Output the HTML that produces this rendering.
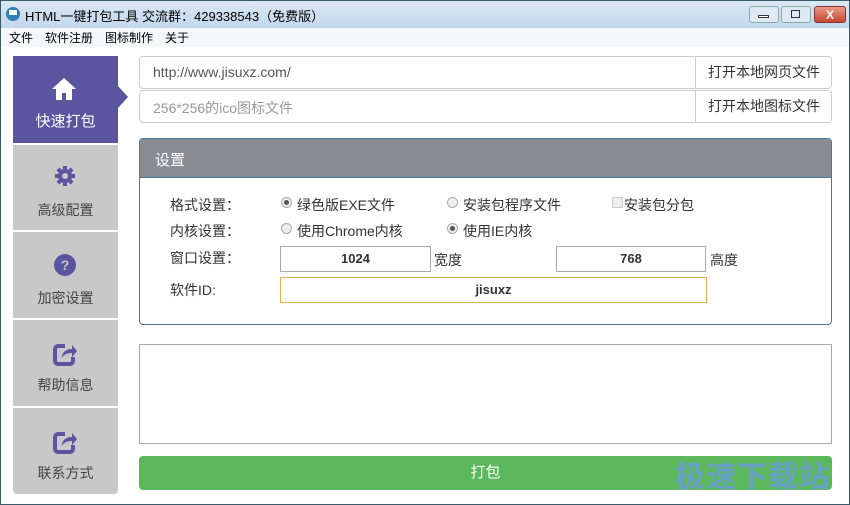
<!DOCTYPE html>
<html><head><meta charset="utf-8"><style>
*{box-sizing:border-box;margin:0;padding:0}
body{width:850px;height:505px;overflow:hidden;font-family:"Liberation Sans","Noto Sans CJK SC",sans-serif;background:#1e3d4a;position:relative}
.win{position:absolute;left:0;top:0;width:850px;height:505px;background:#fff;border:1px solid #3a5a68}
.title{position:absolute;left:0;top:0;width:848px;height:27px;background:linear-gradient(#dbe8f5,#c2d6ec);font-size:13px;color:#000}
.menu{position:absolute;left:0;top:27px;width:848px;height:19px;background:#f5f6f7;font-size:12px}
.menu span{position:absolute;top:1px}
.abs{position:absolute}
.side{position:absolute;left:12px;width:105px;background:#c8c8c8;color:#444;text-align:center;font-size:14px}
.inp{position:absolute;left:138px;width:693px;height:33px;border:1px solid #ccc;border-radius:4px;font-size:14px;color:#555}
.inp .t{position:absolute;left:13px;top:7px}
.inp .b{position:absolute;left:555px;top:0;width:137px;height:31px;border-left:1px solid #ccc;color:#333;text-align:center;line-height:31px}
.lab{position:absolute;font-size:14px;color:#333}
.rad{position:absolute;width:11px;height:11px;border-radius:50%;border:1px solid #aaa;background:#eee}
.rad.on::after{content:"";position:absolute;left:2px;top:2px;width:5px;height:5px;border-radius:50%;background:#555}
.box{position:absolute;border:1px solid #aaa;font-size:13px;font-weight:bold;text-align:center;line-height:24px;color:#333}
</style></head><body><div class="win">
<div class="title">
<div class="abs" style="left:5px;top:6px;width:14px;height:14px;border-radius:50%;background:#2e7fb8"></div>
<div class="abs" style="left:8px;top:9px;width:8px;height:5px;background:#fff"></div>
<span class="abs" style="left:24px;top:5px">HTML一键打包工具 交流群：429338543（免费版）</span>
<div class="abs" style="left:748px;top:5px;width:30px;height:17px;border:1px solid #8aa;border-radius:3px;background:#dfe9f4"></div>
<div class="abs" style="left:757px;top:14px;width:11px;height:3px;border:1px solid #333;background:#fff"></div>
<div class="abs" style="left:780px;top:5px;width:30px;height:17px;border:1px solid #8aa;border-radius:3px;background:#dfe9f4"></div>
<div class="abs" style="left:790px;top:9px;width:9px;height:8px;border:1px solid #333"></div>
<div class="abs" style="left:813px;top:5px;width:32px;height:17px;border:1px solid #833;border-radius:3px;background:linear-gradient(#e79a8c,#c7452f);color:#fff;font-weight:bold;text-align:center;font-size:12px;line-height:16px">X</div>
</div>
<div class="menu"><span style="left:8px">文件</span><span style="left:44px">软件注册</span><span style="left:104px">图标制作</span><span style="left:164px">关于</span></div>

<div class="side" style="top:55px;height:87px;background:#5b55a0;color:#fff;font-size:15px">
<svg class="abs" style="left:38px;top:20px" width="26" height="26" viewBox="0 0 26 26"><path d="M13 2L1 13h4v11h6v-7h4v7h6V13h4z" fill="#fff"/></svg>
<div class="abs" style="left:0;width:105px;top:54px">快速打包</div></div>
<svg class="abs" style="left:117px;top:85px" width="10" height="22"><path d="M0 0L10 11L0 22z" fill="#5b55a0"/></svg>
<div class="side" style="top:144px;height:85px">
<svg class="abs" style="left:41px;top:20px" width="22" height="22" viewBox="0 0 22 22"><g fill="#5b55a0"><circle cx="11" cy="11" r="7"/><rect x="9" y="1" width="4" height="20"/><rect x="1" y="9" width="20" height="4"/><rect x="9" y="1" width="4" height="20" transform="rotate(45 11 11)"/><rect x="9" y="1" width="4" height="20" transform="rotate(-45 11 11)"/></g><circle cx="11" cy="11" r="3" fill="#c8c8c8"/></svg>
<div class="abs" style="left:0;width:105px;top:55px">高级配置</div></div>
<div class="side" style="top:231px;height:86px">
<svg class="abs" style="left:40px;top:21px" width="24" height="24"><circle cx="12" cy="12" r="11" fill="#5b55a0"/><text x="12" y="17" font-size="14" font-weight="bold" fill="#c8c8c8" text-anchor="middle" font-family="Liberation Sans">?</text></svg>
<div class="abs" style="left:0;width:105px;top:56px">加密设置</div></div>
<div class="side" style="top:319px;height:86px">
<svg class="abs" style="left:40px;top:22px" width="24" height="24" viewBox="0 0 24 24"><path d="M12 4H5a3 3 0 0 0-3 3v12a3 3 0 0 0 3 3h12a3 3 0 0 0 3-3v-4" fill="none" stroke="#5b55a0" stroke-width="4"/><path d="M9 16c0-6 4-9 10-9V3l5 6-5 6v-4c-4 0-8 1-10 5z" fill="#5b55a0"/></svg>
<div class="abs" style="left:0;width:105px;top:55px">帮助信息</div></div>
<div class="side" style="top:407px;height:86px;border-radius:0 0 4px 4px">
<svg class="abs" style="left:40px;top:22px" width="24" height="24" viewBox="0 0 24 24"><path d="M12 4H5a3 3 0 0 0-3 3v12a3 3 0 0 0 3 3h12a3 3 0 0 0 3-3v-4" fill="none" stroke="#5b55a0" stroke-width="4"/><path d="M9 16c0-6 4-9 10-9V3l5 6-5 6v-4c-4 0-8 1-10 5z" fill="#5b55a0"/></svg>
<div class="abs" style="left:0;width:105px;top:55px">联系方式</div></div>

<div class="inp" style="top:55px"><span class="t">http://www.jisuxz.com/</span><span class="b">打开本地网页文件</span></div>
<div class="inp" style="top:89px;color:#999"><span class="t">256*256的ico图标文件</span><span class="b">打开本地图标文件</span></div>

<div class="abs" style="left:138px;top:137px;width:693px;height:187px;border:1px solid #4a7a9a;border-radius:4px;overflow:hidden">
<div style="height:39px;background:#8a8c93;border-bottom:1px solid #4a7a9a;color:#fff;font-size:15px;padding:10px 0 0 15px">设置</div>
</div>
<span class="lab" style="left:169px;top:194px">格式设置：</span>
<span class="lab" style="left:169px;top:220px">内核设置：</span>
<span class="lab" style="left:169px;top:247px">窗口设置：</span>
<span class="lab" style="left:169px;top:279px">软件ID:</span>
<div class="rad on" style="left:280px;top:196px"></div><span class="lab" style="left:296px;top:194px">绿色版EXE文件</span>
<div class="rad" style="left:446px;top:196px"></div><span class="lab" style="left:462px;top:194px">安装包程序文件</span>
<div class="abs" style="left:611px;top:196px;width:11px;height:11px;border:1px solid #ccc;background:#eee"></div><span class="lab" style="left:623px;top:194px">安装包分包</span>
<div class="rad" style="left:280px;top:222px"></div><span class="lab" style="left:296px;top:220px">使用Chrome内核</span>
<div class="rad on" style="left:446px;top:222px"></div><span class="lab" style="left:462px;top:220px">使用IE内核</span>
<div class="box" style="left:279px;top:245px;width:151px;height:26px">1024</div><span class="lab" style="left:433px;top:249px">宽度</span>
<div class="box" style="left:555px;top:245px;width:150px;height:26px">768</div><span class="lab" style="left:709px;top:249px">高度</span>
<div class="box" style="left:279px;top:276px;width:427px;height:26px;border-color:#e0b050;border-width:1.5px">jisuxz</div>

<div class="abs" style="left:138px;top:343px;width:693px;height:100px;border:1px solid #aaa"></div>
<div class="abs" style="left:138px;top:455px;width:693px;height:34px;background:#5cb85c;border-radius:4px;color:#fff;font-size:15px;text-align:center;line-height:34px">打包</div>
<div class="abs" style="left:674px;top:451px;font-size:30px;font-weight:bold;color:#6a9fd0;opacity:.9;letter-spacing:1px">极速下载站</div>
</div></body></html>
